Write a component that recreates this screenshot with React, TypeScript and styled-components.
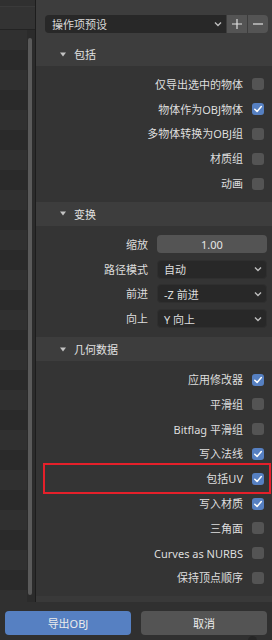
import React from 'react';
import styled, { createGlobalStyle } from 'styled-components';

const Global = createGlobalStyle`
  html, body { margin: 0; padding: 0; background: #303030; }
  body {
    width: 272px; height: 640px; overflow: hidden;
    font-family: "Noto Sans", "Noto Sans CJK SC", sans-serif;
    font-size: 11px; color: #dcdcdc;
  }
  * { box-sizing: border-box; }
`;

const Frame = styled.div`
  position: relative;
  width: 272px;
  height: 640px;
  display: flex;
  flex-direction: column;
  background: #303030;
  overflow: hidden;
`;

const Main = styled.div`
  display: flex;
  height: 602px;
`;

const Outliner = styled.div`
  width: 36px;
  display: flex;
  flex-direction: column;
  border-right: 1px solid #1d1d1d;
  background: #2b2b2b;
`;

const OutlinerHeader = styled.div`
  height: 30px;
  flex: none;
  background: linear-gradient(#303030 0 6px, #3a3a3a 6px 7px, #333333 7px);
  border-bottom: 1px solid #232323;
`;

const OutlinerBody = styled.div`
  flex: 1;
  display: flex;
  overflow: hidden;
`;

const OutlinerList = styled.div`
  width: 27px;
  display: flex;
  flex-direction: column;
`;

const OutlinerRow = styled.div<{ $odd: boolean }>`
  height: 20px;
  flex: none;
  background: ${p => (p.$odd ? '#2a2a2a' : '#303030')};
`;

const ScrollTrack = styled.div`
  flex: 1;
  display: flex;
  justify-content: flex-start;
  padding: 8px 0 7px 1px;
`;

const ScrollThumb = styled.div`
  width: 4px;
  height: 100%;
  border-radius: 2px;
  background: #5a5a5a;
`;

const Props = styled.div`
  flex: 1;
  display: flex;
  flex-direction: column;
  background: #343434;
`;

const TopBar = styled.div`
  height: 42px;
  flex: none;
  background: #3d3d3d;
  padding: 15px 4px 0 9px;
  display: flex;
  align-items: flex-start;
`;

const PresetSelect = styled.div`
  flex: 1;
  height: 18px;
  display: flex;
  align-items: center;
  justify-content: space-between;
  padding: 0 4px 0 7px;
  background: #282828;
  border-radius: 4px 0 0 4px;
  color: #dadada;
`;

const PresetButton = styled.div<{ $last?: boolean }>`
  width: 20px;
  height: 18px;
  display: flex;
  align-items: center;
  justify-content: center;
  margin-left: 1px;
  background: #545454;
  border-radius: ${p => (p.$last ? '0 4px 4px 0' : '0')};
`;

const PanelHeader = styled.div`
  height: 24px;
  flex: none;
  display: flex;
  align-items: center;
  gap: 8px;
  padding-left: 24px;
  background: #3d3d3d;
  color: #e2e2e2;
`;

const PanelBody = styled.div`
  display: flex;
  flex-direction: column;
  padding: 6px 0;
`;

const CheckRow = styled.div`
  height: 24.8px;
  display: flex;
  align-items: center;
  justify-content: flex-end;
  gap: 9px;
  padding-right: 8px;
`;

const Label = styled.span`
  color: #dedede;
  white-space: nowrap;
  line-height: 1;
`;

const Box = styled.div<{ $on: boolean }>`
  width: 12px;
  height: 12px;
  border-radius: 3px;
  background: ${p => (p.$on ? '#5680c2' : '#545454')};
  display: flex;
  align-items: center;
  justify-content: center;
`;

const FieldRow = styled.div`
  height: 24.8px;
  display: grid;
  grid-template-columns: 1fr 110px;
  align-items: center;
  column-gap: 9px;
  padding-right: 5px;
`;

const FieldLabel = styled(Label)`
  text-align: right;
`;

const NumberField = styled.div`
  height: 18px;
  border-radius: 4px;
  background: #545454;
  display: flex;
  align-items: center;
  justify-content: center;
  color: #e6e6e6;
`;

const SelectField = styled.div`
  height: 19px;
  border-radius: 4px;
  background: #282828;
  border: 1px solid #2f2f2f;
  display: flex;
  align-items: center;
  justify-content: space-between;
  padding: 0 4px 0 6px;
  color: #dedede;
`;

const RegionEdge = styled.div`
  flex: 1;
  background: #393939;
`;

const Footer = styled.div`
  flex: 1;
  display: flex;
  gap: 10px;
  padding: 9px 5px 0;
`;

const FooterButton = styled.div<{ $primary?: boolean }>`
  flex: 1;
  height: 24px;
  border-radius: 4px;
  background: ${p => (p.$primary ? '#5680c2' : '#545454')};
  display: flex;
  align-items: center;
  justify-content: center;
  color: #ececec;
`;

const Highlight = styled.div`
  position: absolute;
  left: 43px;
  top: 463px;
  width: 228px;
  height: 31px;
  border: 2px solid #e5202a;
  pointer-events: none;
`;

const ResizeGrip = styled.div`
  position: absolute;
  right: 15px;
  bottom: -5px;
  width: 9px;
  height: 9px;
  border-radius: 50%;
  background: #262626;
`;

const Chevron = () => (
  <svg width="8" height="6" viewBox="0 0 8 6">
    <path d="M1 1.5 L4 4.5 L7 1.5" fill="none" stroke="#bdbdbd" strokeWidth="1.4" />
  </svg>
);

const Triangle = () => (
  <svg width="6" height="5" viewBox="0 0 6 5">
    <path d="M0 0.5 H6 L3 4.5 Z" fill="#c4c4c4" />
  </svg>
);

const Check = () => (
  <svg width="10" height="10" viewBox="0 0 10 10">
    <path d="M1.8 5.2 L4.1 7.4 L8.3 2.6" fill="none" stroke="#ffffff" strokeWidth="1.5" strokeLinecap="round" strokeLinejoin="round" />
  </svg>
);

const Plus = () => (
  <svg width="12" height="12" viewBox="0 0 12 12">
    <path d="M6 1 V11 M1 6 H11" stroke="#e0e0e0" strokeWidth="1.2" />
  </svg>
);

const Minus = () => (
  <svg width="12" height="12" viewBox="0 0 12 12">
    <path d="M1 6 H11" stroke="#e0e0e0" strokeWidth="1.2" />
  </svg>
);

const Checkbox = ({ label, on }: { label: string; on?: boolean }) => (
  <CheckRow>
    <Label>{label}</Label>
    <Box $on={!!on}>{on && <Check />}</Box>
  </CheckRow>
);

const Section = ({ title }: { title: string }) => (
  <PanelHeader>
    <Triangle />
    <span>{title}</span>
  </PanelHeader>
);

export default function App() {
  const rows = Array.from({ length: 29 }, (_, i) => i);
  return (
    <Frame>
      <Global />
      <Main>
        <Outliner>
          <OutlinerHeader />
          <OutlinerBody>
            <OutlinerList>
              {rows.map(i => (
                <OutlinerRow key={i} $odd={i % 2 === 1} />
              ))}
            </OutlinerList>
            <ScrollTrack>
              <ScrollThumb />
            </ScrollTrack>
          </OutlinerBody>
        </Outliner>
        <Props>
          <TopBar>
            <PresetSelect>
              <span>操作项预设</span>
              <Chevron />
            </PresetSelect>
            <PresetButton>
              <Plus />
            </PresetButton>
            <PresetButton $last>
              <Minus />
            </PresetButton>
          </TopBar>

          <Section title="包括" />
          <PanelBody>
            <Checkbox label="仅导出选中的物体" />
            <Checkbox label="物体作为OBJ物体" on />
            <Checkbox label="多物体转换为OBJ组" />
            <Checkbox label="材质组" />
            <Checkbox label="动画" />
          </PanelBody>

          <Section title="变换" />
          <PanelBody>
            <FieldRow>
              <FieldLabel>缩放</FieldLabel>
              <NumberField>1.00</NumberField>
            </FieldRow>
            <FieldRow>
              <FieldLabel>路径模式</FieldLabel>
              <SelectField>
                <span>自动</span>
                <Chevron />
              </SelectField>
            </FieldRow>
            <FieldRow>
              <FieldLabel>前进</FieldLabel>
              <SelectField>
                <span>-Z 前进</span>
                <Chevron />
              </SelectField>
            </FieldRow>
            <FieldRow>
              <FieldLabel>向上</FieldLabel>
              <SelectField>
                <span>Y 向上</span>
                <Chevron />
              </SelectField>
            </FieldRow>
          </PanelBody>

          <Section title="几何数据" />
          <PanelBody>
            <Checkbox label="应用修改器" on />
            <Checkbox label="平滑组" />
            <Checkbox label="Bitflag 平滑组" />
            <Checkbox label="写入法线" on />
            <Checkbox label="包括UV" on />
            <Checkbox label="写入材质" on />
            <Checkbox label="三角面" />
            <Checkbox label="Curves as NURBS" />
            <Checkbox label="保持顶点顺序" />
          </PanelBody>
          <RegionEdge />
        </Props>
      </Main>
      <Footer>
        <FooterButton $primary>导出OBJ</FooterButton>
        <FooterButton>取消</FooterButton>
      </Footer>
      <Highlight />
      <ResizeGrip />
    </Frame>
  );
}
